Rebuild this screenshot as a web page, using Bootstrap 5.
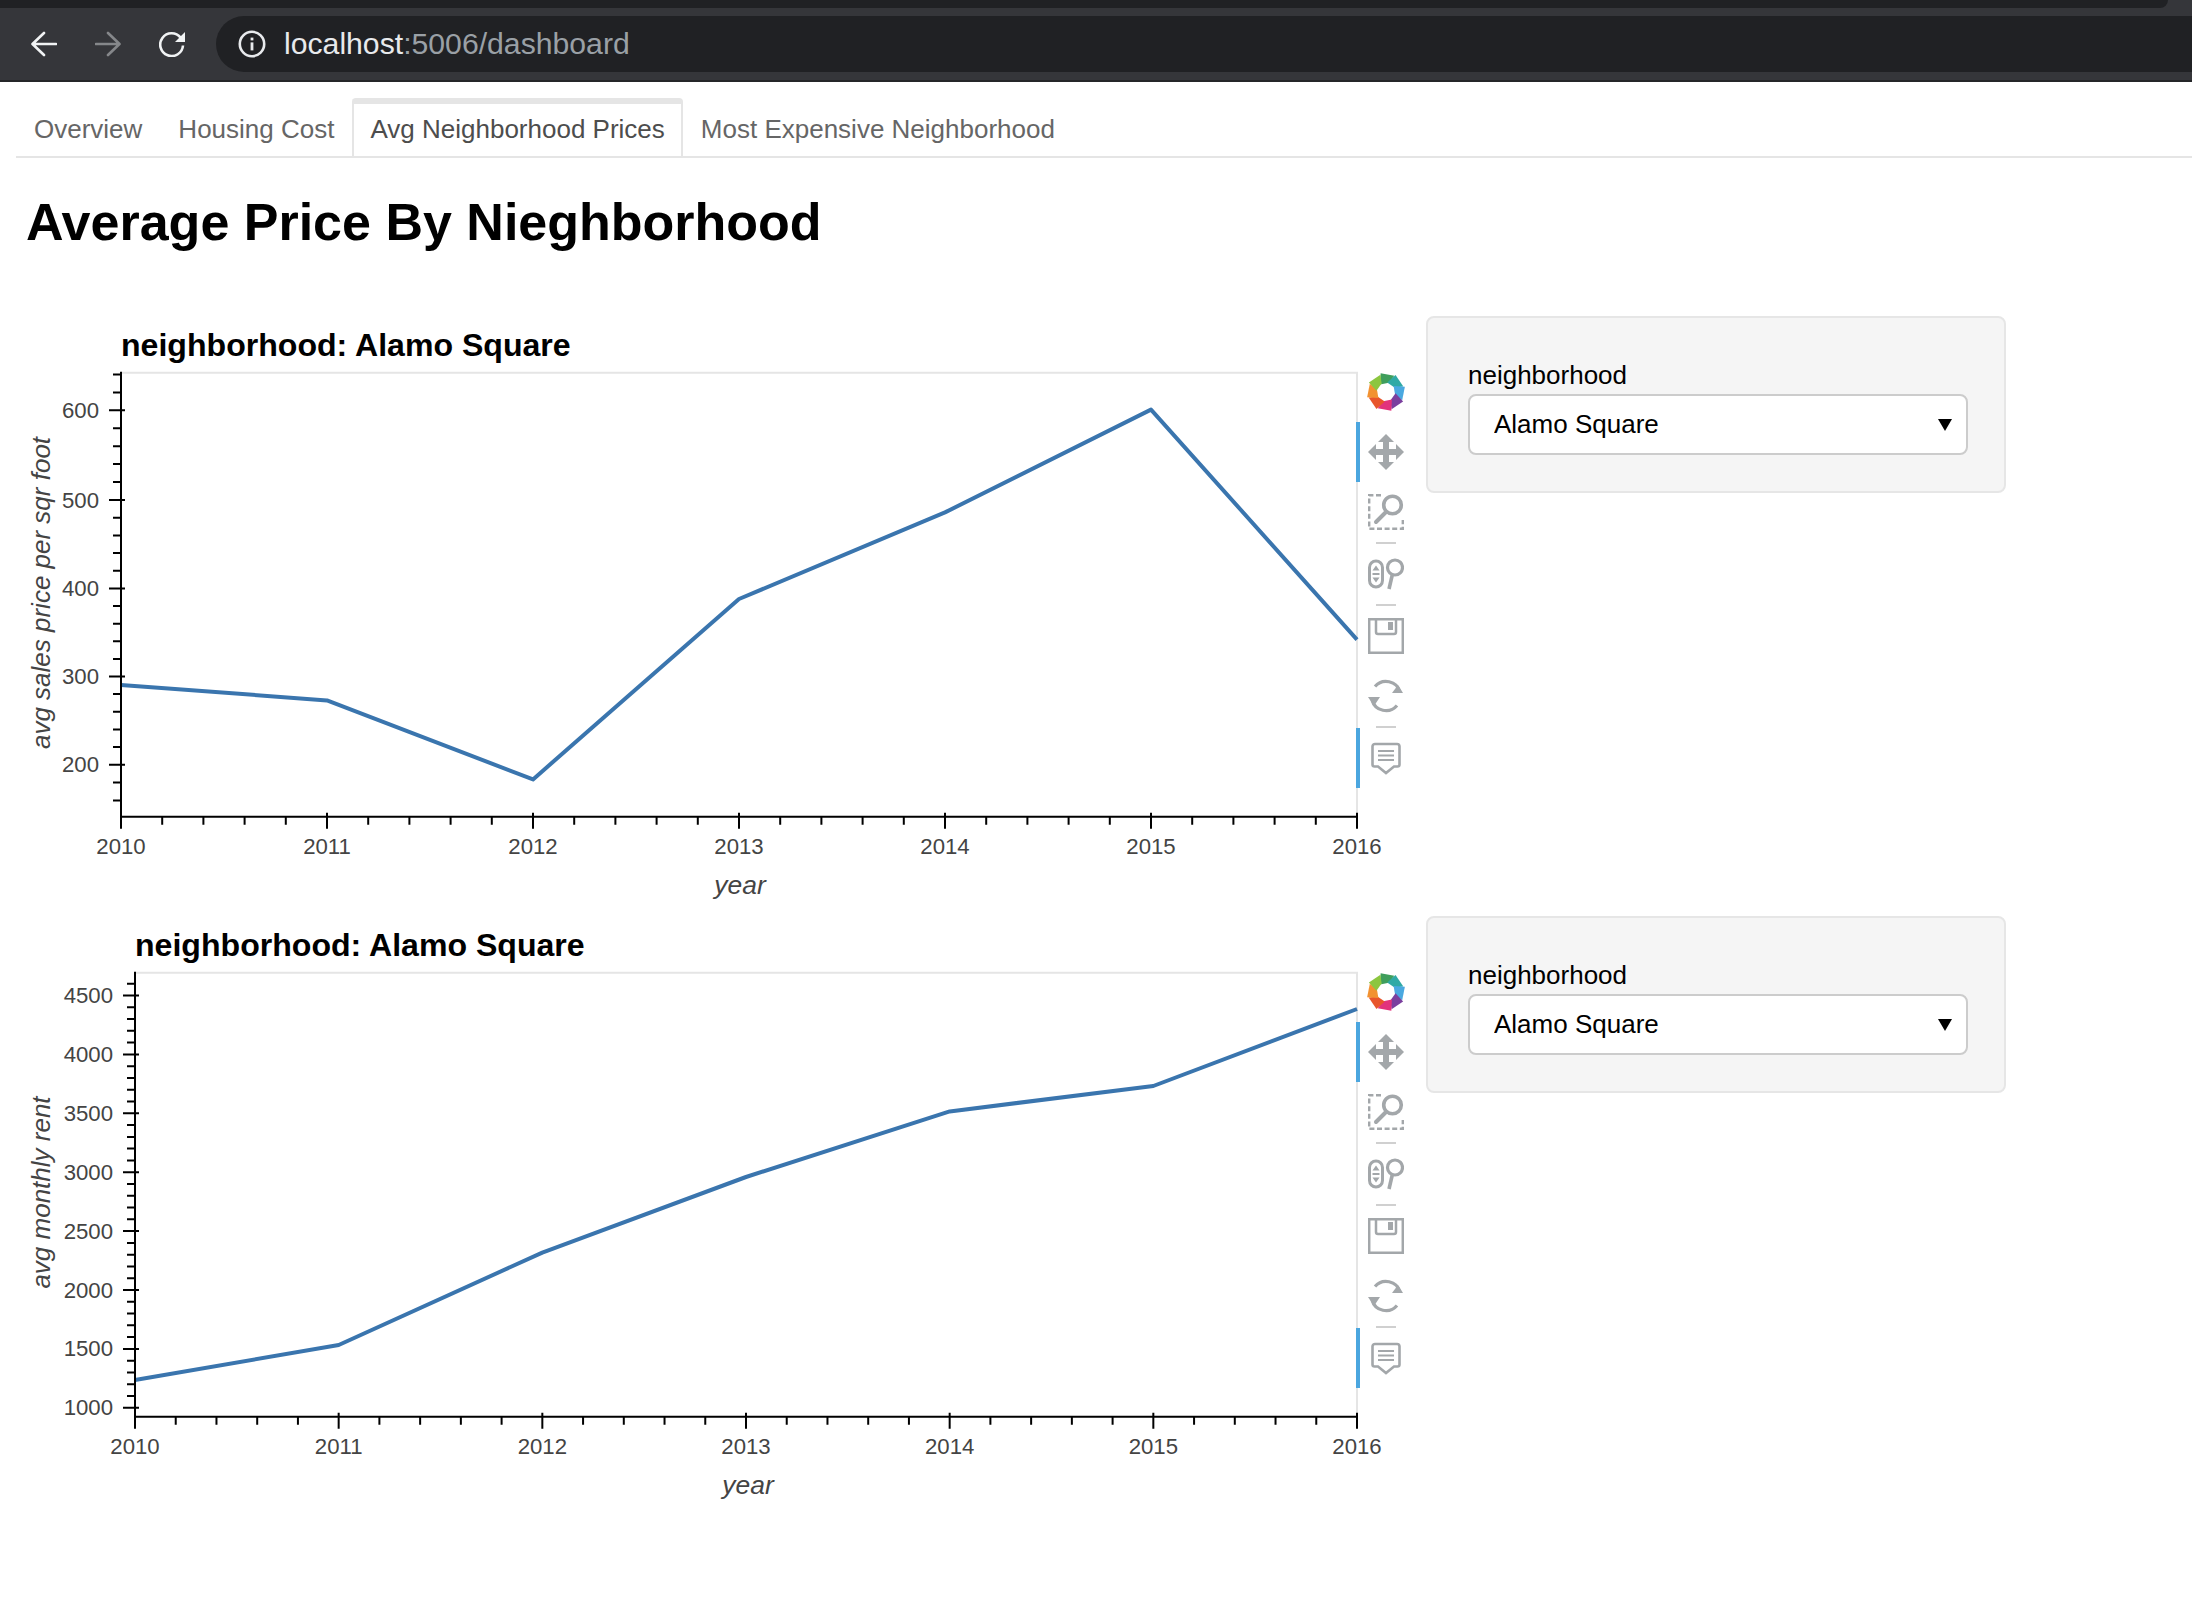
<!DOCTYPE html>
<html lang="en">
<head>
    <meta charset="UTF-8">
    <title>Dashboard</title>
    <link href="https://cdn.jsdelivr.net/npm/bootstrap@5.3.0/dist/css/bootstrap.min.css" rel="stylesheet">
    <style>
        body {
            font-family: "Liberation Sans", Arial, sans-serif;
            background: #fff;
            color: #000;
        }
        .browser-top {
            height: 8px;
            background: #35363a;
        }
        .browser-top-inner {
            height: 8px;
            width: 2168px;
            background: #202124;
            border-bottom-right-radius: 8px;
        }
        .browser-bar {
            height: 74px;
            background: #35363a;
            border-bottom: 2px solid #252629;
            padding: 8px 0 8px 31px;
        }
        .browser-btn {
            width: 26px;
            height: 26px;
            margin-right: 38px;
            flex: none;
        }
        .browser-btn:nth-child(3) {
            margin-right: 31px;
        }
        .url-pill {
            height: 56px;
            background: #202124;
            border-radius: 28px 0 0 28px;
            padding-left: 22px;
            font-size: 30.2px;
            color: #9aa0a6;
            line-height: 56px;
        }
        .url-pill svg {
            margin-right: 18px;
            flex: none;
        }
        .url-host {
            color: #e8eaed;
        }
        .tab-bar.nav-tabs {
            margin: 16px 0 0 16px;
            border-bottom: 2px solid #e5e5e5;
            height: 60px;
        }
        .tab-bar .nav-link {
            font-size: 26px;
            color: #666;
            padding: 13px 18px 0;
            height: 58px;
            margin: 0;
            border: 0;
            border-radius: 0;
            line-height: 36px;
        }
        .tab-bar .nav-link.active {
            color: #4d4d4d;
            background: #fff;
            padding: 7px 16px 0;
            border: solid #e5e5e5;
            border-width: 6px 2px 0;
            border-radius: 4px 4px 0 0;
        }
        .page-title {
            font-size: 52px;
            font-weight: 700;
            margin: 0;
            padding: 34px 0 0 26px;
            height: 158px;
            line-height: 60px;
            color: #000;
        }
        .chart-row {
            height: 600px;
        }
        .chart-svg {
            flex: none;
            display: block;
            overflow: visible;
        }
        .chart-svg text {
            font-family: "Liberation Sans", Arial, sans-serif;
        }
        .bk-tools {
            flex: none;
            width: 60px;
            padding-top: 46px;
        }
        .bk-tool {
            height: 60px;
            border-left: 4px solid transparent;
        }
        .bk-tool.on {
            border-left-color: #4ba6df;
        }
        .bk-tool svg {
            display: block;
            margin-left: 8px;
        }
        .bk-tool svg.bk-logo {
            margin-left: 6px;
            filter: blur(0.6px);
        }
        .bk-sep {
            width: 20px;
            height: 2px;
            background: #d0d0d0;
            margin-left: 20px;
        }
        .widget-box {
            flex: none;
            width: 580px;
            height: 177px;
            margin-left: 10px;
            padding: 40px 40px 0;
            background: #f5f5f5;
            border: 2px solid #e6e6e6;
            border-radius: 8px;
        }
        .widget-box label {
            display: block;
            font-size: 26px;
            line-height: 34px;
            margin: 0 0 2px;
        }
        .widget-box select.form-select {
            font-family: "Liberation Sans", Arial, sans-serif;
            width: 500px;
            height: 61px;
            font-size: 26px;
            padding: 0 40px 0 24px;
            color: #000;
            border: 2px solid #ccc;
            border-radius: 8px;
            background-size: 14px 12px;
            background-position: right 14px center;
            background-image: url("data:image/svg+xml,%3Csvg xmlns='http://www.w3.org/2000/svg' viewBox='0 0 14 12'%3E%3Cpath d='M0 0h14L7 12z'/%3E%3C/svg%3E");
        }
    </style>
</head>
<body>
    <div class="browser-top"><div class="browser-top-inner"></div></div>
    <div class="browser-bar d-flex align-items-center">
        <svg class="browser-btn" viewBox="0 0 26 26" fill="none" stroke="#f1f3f4" stroke-width="2.6" stroke-linecap="round" stroke-linejoin="round"><path d="M25 13H2M13 2 1.5 13 13 24"/></svg>
        <svg class="browser-btn" viewBox="0 0 26 26" fill="none" stroke="#85878a" stroke-width="2.6" stroke-linecap="round" stroke-linejoin="round"><path d="M1 13h23M13 2l11.5 11L13 24"/></svg>
        <svg class="browser-btn" viewBox="0 0 26 26" fill="none"><path d="M21.6 6.6A11.4 11.4 0 1 0 24 14.5" stroke="#f1f3f4" stroke-width="2.6"/><path d="M26 1v10H16z" fill="#f1f3f4"/></svg>
        <div class="url-pill flex-grow-1 d-flex align-items-center">
            <svg width="28" height="28" viewBox="0 0 28 28" fill="none"><circle cx="14" cy="14" r="12.2" stroke="#e8eaed" stroke-width="2.6"/><rect x="12.6" y="12.4" width="2.8" height="8" fill="#e8eaed"/><rect x="12.6" y="7.6" width="2.8" height="2.8" fill="#e8eaed"/></svg>
            <span><span class="url-host">localhost</span>:5006/dashboard</span>
        </div>
    </div>

    <ul class="nav nav-tabs tab-bar">
        <li class="nav-item"><a class="nav-link" href="#">Overview</a></li>
        <li class="nav-item"><a class="nav-link" href="#">Housing Cost</a></li>
        <li class="nav-item"><a class="nav-link active" href="#">Avg Neighborhood Prices</a></li>
        <li class="nav-item"><a class="nav-link" href="#">Most Expensive Neighborhood</a></li>
    </ul>

    <h1 class="page-title">Average Price By Nieghborhood</h1>

    <div id="charts"></div>

    <script>
        const ICON = '#a3a7aa';

        // bokeh logo: eight petals turning round a white centre
        const petalColors = ['#3f9e5c', '#2fa9a6', '#4aa8e0', '#7b3f9e', '#e2327c', '#e8552c', '#f29231', '#8cc640'];
        const petals = petalColors.map((c, i) =>
            `<path transform="rotate(${i * 45 - 10} 20 20)" d="M15.500 11.500 18 .5 31 5.500 24.500 11.500z" fill="${c}"/>`
        ).join('');

        const toolIcons = {
            logo: `<svg class="bk-logo" width="40" height="40" viewBox="0 0 40 40">${petals}</svg>`,
            pan: `<svg width="36" height="36" viewBox="0 0 36 36" fill="${ICON}"><path d="M18 0l8 8h-5v7h7v-5l8 8-8 8v-5h-7v7h5l-8 8-8-8h5v-7h-7v5l-8-8 8-8v5h7V8h-5z"/></svg>`,
            box: `<svg width="36" height="36" viewBox="0 0 36 36" fill="none" stroke="${ICON}"><path stroke-width="2.400" stroke-dasharray="5 2.600" d="M13 1.200H1.200v33.600h33.600V26"/><circle cx="24.500" cy="11" r="8.800" stroke-width="3.600"/><path stroke-width="4" stroke-linecap="round" d="M18 18 8 28"/></svg>`,
            wheel: `<svg width="36" height="36" viewBox="0 0 36 36" fill="none" stroke="${ICON}"><rect x="1.500" y="5" width="13" height="26" rx="6.500" stroke-width="3"/><path fill="${ICON}" stroke="none" d="M8 9.500l3.500 5h-7zM8 26.500l3.500-5h-7zM4.500 17h7v2h-7z"/><circle cx="27" cy="11.500" r="7.500" stroke-width="3.200"/><path stroke-width="3.600" d="M24.500 18l-3.500 15"/></svg>`,
            save: `<svg width="36" height="36" viewBox="0 0 36 36" fill="none" stroke="${ICON}" stroke-width="2.500"><path d="M1.200 1.200h33.600v33.600H1.200z"/><path d="M8 1v13a2 2 0 0 0 2 2h16a2 2 0 0 0 2-2V1"/><rect x="20" y="4" width="5" height="8" fill="${ICON}" stroke="none"/></svg>`,
            reset: `<svg width="36" height="36" viewBox="0 0 36 36" fill="none" stroke="${ICON}" stroke-width="3.200"><path d="M32 14A14.500 14.500 0 0 0 7 8.500"/><path d="M4 22A14.500 14.500 0 0 0 29 27.500"/><path fill="${ICON}" stroke="none" d="M24 15l11 0-5-8zM0 19l12 0-6 9z"/></svg>`,
            hover: `<svg width="36" height="36" viewBox="0 0 36 36" fill="none" stroke="${ICON}"><path stroke-width="2.600" d="M7 4h22a2.500 2.500 0 0 1 2.500 2.500v18a2 2 0 0 1-2 2h-3.500L18 33l-8-6.500H6.500a2 2 0 0 1-2-2v-18A2.500 2.500 0 0 1 7 4z"/><path stroke-width="2.200" d="M10 11h16M10 15.500h16M10 20h16"/></svg>`
        };

        function toolbar() {
            const tool = (name, on) => `<div class="bk-tool d-flex align-items-center${on ? ' on' : ''}">${toolIcons[name]}</div>`;
            const sep = '<div class="bk-sep"></div>';
            return `<div class="bk-tools">${tool('logo')}${tool('pan', true)}${tool('box')}${sep}${tool('wheel')}${sep}${tool('save')}${tool('reset')}${sep}${tool('hover', true)}</div>`;
        }

        const top_ = 56.8, bottom = 500.7, right = 1357;

        function drawChart(c) {
            const xs = c.values.map((v, i) => c.left + i * (right - c.left) / 6);
            let s = '';
            // frame
            s += `<path d="M${c.left} ${top_}H${right}V${bottom}" fill="none" stroke="#e5e5e5" stroke-width="2"/>`;
            // data line
            const pts = c.values.map((y, i) => `${xs[i].toFixed(1)},${y}`).join(' ');
            s += `<polyline points="${pts}" fill="none" stroke="#3a75ae" stroke-width="4" stroke-linejoin="round"/>`;
            // axes
            let ticks = `M${c.left} ${top_ - 1}V${bottom + 1}M${c.left - 1} ${bottom}H${right + 1}`;
            for (let i = 0; i < 7; i++) {
                ticks += `M${xs[i]} ${bottom - 4}V${bottom + 12}`;
                if (i < 6) {
                    for (let m = 1; m < 5; m++) {
                        const x = xs[i] + m * (xs[i + 1] - xs[i]) / 5;
                        ticks += `M${x} ${bottom}V${bottom + 8}`;
                    }
                }
                s += `<text x="${xs[i]}" y="${bottom + 37.500}" text-anchor="middle" font-size="22.200" fill="#444">${2010 + i}</text>`;
            }
            c.yTicks.forEach((t, i) => {
                ticks += `M${c.left - 12} ${t.y}H${c.left + 4}`;
                s += `<text x="${c.left - 22}" y="${t.y + 7.500}" text-anchor="end" font-size="22.200" fill="#444">${t.label}</text>`;
                // minor ticks down to the next major one
                const next = c.yTicks[i + 1];
                if (next) {
                    for (let m = 1; m <= c.minors; m++) {
                        ticks += `M${c.left - 8} ${(t.y + m * (next.y - t.y) / (c.minors + 1)).toFixed(1)}H${c.left}`;
                    }
                }
            });
            const step = (c.yTicks[1].y - c.yTicks[0].y) / (c.minors + 1);
            for (let y = c.yTicks[0].y - step; y > top_; y -= step) ticks += `M${c.left - 8} ${y.toFixed(1)}H${c.left}`;
            for (let y = c.yTicks[c.yTicks.length - 1].y + step; y < bottom; y += step) ticks += `M${c.left - 8} ${y.toFixed(1)}H${c.left}`;
            s += `<path d="${ticks}" stroke="#000" stroke-width="2" fill="none"/>`;
            // titles
            s += `<text x="${c.left}" y="40" font-size="32.100" font-weight="700" fill="#000">neighborhood: Alamo Square</text>`;
            s += `<text x="${c.xLabelX}" y="578" text-anchor="middle" font-size="26.400" font-style="italic" fill="#444">year</text>`;
            s += `<text transform="translate(50 ${c.yLabelY}) rotate(-90)" text-anchor="middle" font-size="26" font-style="italic" fill="#444">${c.yLabel}</text>`;
            return `<div class="chart-row d-flex align-items-start">
                <svg class="chart-svg" width="1356" height="600" viewBox="0 0 1356 600">${s}</svg>
                ${toolbar()}
                <div class="widget-box">
                    <label>neighborhood</label>
                    <select class="form-select"><option>Alamo Square</option></select>
                </div>
            </div>`;
        }

        // positions are relative to the top of each row
        const ys1 = [94.3, 184, 272.5, 360.5, 448.7];
        const ticks1 = ['600', '500', '400', '300', '200'].map((label, i) => ({ label, y: ys1[i] }));
        const ticks2 = ['4500', '4000', '3500', '3000', '2500', '2000', '1500', '1000'].map((label, i) => ({ label, y: +(79.5 + i * 58.9).toFixed(1) }));

        document.getElementById('charts').innerHTML = drawChart({
            left: 121,
            values: [369, 384.4, 463.4, 283, 196.4, 93.6, 323.6],
            yTicks: ticks1,
            minors: 4,
            xLabelX: 740,
            yLabel: 'avg sales price per sqr foot',
            yLabelY: 277
        }) + drawChart({
            left: 135,
            values: [464, 429, 336.6, 261, 195.4, 170, 93],
            yTicks: ticks2,
            minors: 4,
            xLabelX: 748,
            yLabel: 'avg monthly rent',
            yLabelY: 276.5
        });
    </script>
    <script src="https://cdn.jsdelivr.net/npm/bootstrap@5.3.0/dist/js/bootstrap.bundle.min.js"></script>
</body>
</html>
